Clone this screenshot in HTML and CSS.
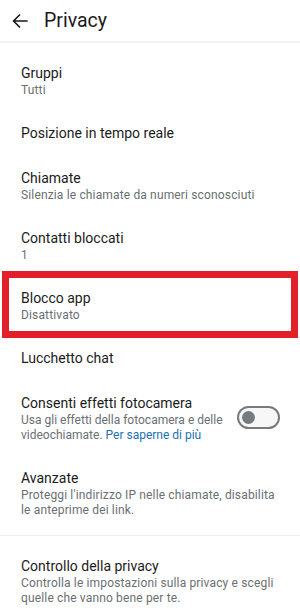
FILE: index.html
```html
<!DOCTYPE html>
<html lang="it">
<head>
<meta charset="utf-8">
<link rel="stylesheet" href="styles.css">
</head>
<body>
<div class="screen">
  <header class="topbar">
    <svg class="back" width="16" height="14" viewBox="0 0 16 14"><path d="M15 7H1.5M7.5 1L1.5 7l6 6" fill="none" stroke="#1a1a1a" stroke-width="1.7" stroke-linecap="round" stroke-linejoin="round"/></svg>
    <h1 class="title">Privacy</h1>
  </header>
  <main class="list">
    <div class="item"><div class="text"><div class="t">Gruppi</div><div class="s">Tutti</div></div></div>
    <div class="item"><div class="text"><div class="t">Posizione in tempo reale</div></div></div>
    <div class="item"><div class="text"><div class="t">Chiamate</div><div class="s">Silenzia le chiamate da numeri sconosciuti</div></div></div>
    <div class="item"><div class="text"><div class="t">Contatti bloccati</div><div class="s">1</div></div></div>
    <div class="item highlighted"><div class="text"><div class="t">Blocco app</div><div class="s">Disattivato</div></div><span class="mark"></span></div>
    <div class="item"><div class="text"><div class="t">Lucchetto chat</div></div></div>
    <div class="item"><div class="text narrow"><div class="t">Consenti effetti fotocamera</div><div class="s tight">Usa gli effetti della fotocamera e delle videochiamate. <span class="link">Per saperne di più</span></div></div><span class="toggle"><span class="knob"></span></span></div>
    <div class="item"><div class="text"><div class="t">Avanzate</div><div class="s">Proteggi l'indirizzo IP nelle chiamate, disabilita le anteprime dei link.</div></div></div>
    <div class="divider"></div>
    <div class="item"><div class="text"><div class="t">Controllo della privacy</div><div class="s">Controlla le impostazioni sulla privacy e scegli quelle che vanno bene per te.</div></div></div>
  </main>
</div>
</body>
</html>
```
FILE: styles.css
```css
html, body {
  margin: 0;
  padding: 0;
  background: #ffffff;
}
body {
  font-family: Roboto, "Noto Sans", sans-serif;
  color: #1b1b1b;
}
.screen {
  width: 300px;
  overflow: hidden;
}
.topbar {
  height: 41px;
  display: flex;
  align-items: center;
  border-bottom: 2px solid #f3f3f3;
}
.back {
  margin-left: 12px;
  margin-right: 16px;
}
.title {
  margin: 0;
  font-size: 19.5px;
  font-weight: 400;
  line-height: 41px;
  color: #1b1b1b;
}
.list {
  padding-top: 8px;
}
.item {
  position: relative;
  display: flex;
  align-items: flex-start;
  padding: 13px 20px 13px 21px;
}
.text {
  flex: 1;
  min-width: 0;
}
.text.narrow {
  flex: 0 0 214px;
  margin-right: 2px;
}
.t {
  font-size: 14px;
  line-height: 19px;
  color: #1b1b1b;
}
.s {
  font-size: 12px;
  letter-spacing: 0.15px;
  line-height: 15px;
  color: #6a6f73;
}
.s.tight {
  letter-spacing: 0;
}
.link {
  color: #1c70b3;
}
.mark {
  position: absolute;
  left: 2px;
  right: 2px;
  top: -5px;
  bottom: -2px;
  border: 7px solid #e3202a;
}
.toggle {
  box-sizing: border-box;
  width: 43px;
  height: 23px;
  margin-top: 12px;
  border: 2px solid #7a7a7a;
  border-radius: 12px;
  background: #f7f7f7;
  display: flex;
  align-items: center;
  padding-left: 3px;
}
.knob {
  width: 13px;
  height: 13px;
  border-radius: 50%;
  background: #767b80;
}
.divider {
  height: 1px;
  margin: 4px 0 8px;
  background: #ededed;
}
```
